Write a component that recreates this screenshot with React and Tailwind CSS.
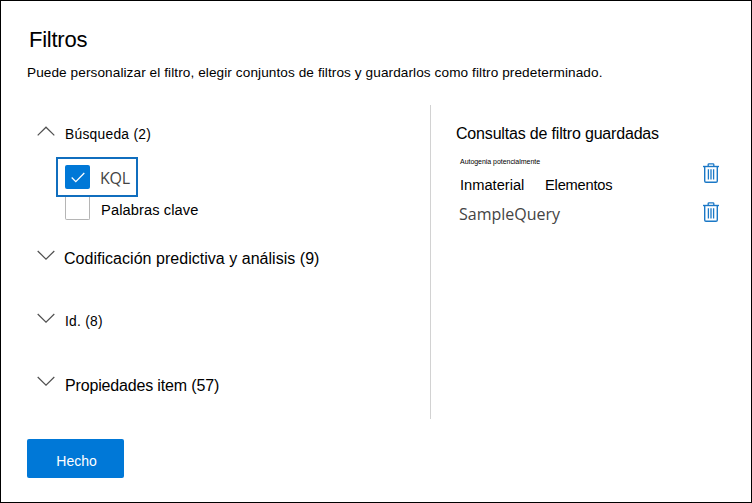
import React from "react";

function Chevron({ up = false }) {
  return (
    <svg width="18" height="10" viewBox="0 0 18 10" fill="none" stroke="#505050" strokeWidth="1.2" className="block shrink-0">
      <path d={up ? "M0.7 9.4 L9 1.2 L17.3 9.4" : "M0.7 1 L9 9.1 L17.3 1"} />
    </svg>
  );
}

function Trash() {
  return (
    <svg width="16" height="20" viewBox="0 0 16 20" fill="none" stroke="#1b78c6" className="block shrink-0">
      <path d="M0 3.5 H16" strokeWidth="1.4" />
      <path d="M5.2 3.2 V1.6 Q5.2 0.8 6 0.8 H10 Q10.8 0.8 10.8 1.6 V3.2" strokeWidth="1.3" />
      <path d="M1.7 3.8 V18 Q1.7 19.3 3 19.3 H13 Q14.3 19.3 14.3 18 V3.8" strokeWidth="1.4" />
      <path d="M5.4 6.2 V16.6 M8 6.2 V16.6 M10.6 6.2 V16.6" strokeWidth="1.3" />
    </svg>
  );
}

export default function App() {
  return (
    <div className="flex h-[503px] w-[752px] flex-col overflow-hidden border border-black bg-white pl-[26px] pt-[27px] font-['Liberation_Sans',Arial,sans-serif] whitespace-nowrap text-black">
      <h1 className="ml-[2px] h-6 text-[22px] leading-6 tracking-[-0.25px]">Filtros</h1>
      <p className="mt-[11px] h-5 text-[13.6px] leading-5 tracking-[0.09px]">
        Puede personalizar el filtro, elegir conjuntos de filtros y guardarlos como filtro predeterminado.
      </p>

      <div className="mt-[22px] flex h-[314px]">
        <section className="w-[403px] pl-2.5">
          <div className="flex h-[52px] items-start pt-[19px]">
            <div className="mt-[2px] mr-[10px]"><Chevron up /></div>
            <span className="mt-px text-[13.8px] leading-5 tracking-[0.27px]">Búsqueda (2)</span>
          </div>
          <div className="ml-[19px] flex h-10 w-[82px] items-center border-2 border-[#106ebe] pl-[7px]">
            <span className="flex h-6 w-[25px] items-center justify-center rounded-[2px] bg-[#0078d7]">
              <svg width="14" height="11" viewBox="0 0 14 11" fill="none" stroke="white" strokeWidth="1.3">
                <path d="M0.7 5.5 L4.8 9.6 L13.3 1" />
              </svg>
            </span>
            <span className="ml-[10px] mt-[2px] font-['Open_Sans',sans-serif] text-[16px] leading-5 tracking-[-0.2px] text-[#444]">KQL</span>
          </div>
          <div className="ml-7 flex h-[23px] items-start">
            <span className="h-[23px] w-[25px] rounded-b-[2px] border border-t-0 border-[#b5b5b5]" />
            <span className="ml-[11px] mt-[3px] text-[14.67px] leading-5 tracking-[0.1px]">Palabras clave</span>
          </div>
          <div className="mt-[28px] flex h-5 items-start">
            <div className="mt-[2px] mr-[9px]"><Chevron /></div>
            <span className="mt-px text-[16px] leading-5 tracking-[0.03px]">Codificación predictiva y análisis (9)</span>
          </div>
          <div className="mt-[43px] flex h-5 items-start">
            <div className="mt-[2px] mr-[10px]"><Chevron /></div>
            <span className="mt-px text-[13.8px] leading-5 tracking-[0.27px]">Id. (8)</span>
          </div>
          <div className="mt-[43px] flex h-5 items-start">
            <div className="mt-[2px] mr-[10px]"><Chevron /></div>
            <span className="mt-[2px] text-[16px] leading-5 tracking-[-0.16px]">Propiedades item (57)</span>
          </div>
        </section>

        <section className="w-[321px] border-l border-[#d2d2d2] pl-[25px]">
          <h2 className="mt-[19px] h-5 text-[16px] leading-5 tracking-[-0.18px]">Consultas de filtro guardadas</h2>
          <div className="mt-[14px] flex h-[40px] justify-between pl-1">
            <div>
              <div className="h-2 text-[7px] leading-2 tracking-[-0.04px]">Autogenia potencialmente</div>
              <div className="mt-[9px] flex text-[14.67px] leading-5">
                <span className="w-[85px]">Inmaterial</span>
                <span className="tracking-[-0.2px]">Elementos</span>
              </div>
            </div>
            <div className="mt-[5px] mr-8"><Trash /></div>
          </div>
          <div className="flex h-6 justify-between pl-[3px]">
            <span className="mt-[6px] font-['Open_Sans',sans-serif] text-[16px] leading-5 text-[#444]">SampleQuery</span>
            <div className="mt-[4px] mr-8"><Trash /></div>
          </div>
        </section>
      </div>

      <button className="mt-5 flex h-[39px] w-[97px] items-center justify-center rounded-[2px] bg-[#0078d7] pl-[2px] pt-[5px] text-[14px] leading-5 text-white">
        Hecho
      </button>
    </div>
  );
}
